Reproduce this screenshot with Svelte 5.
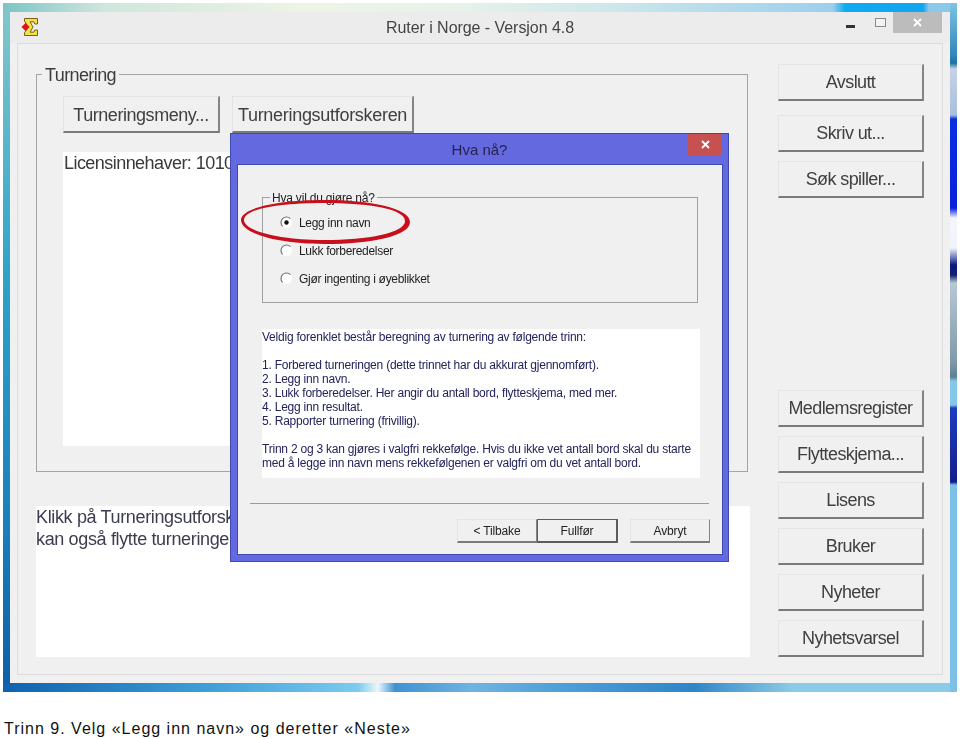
<script>
	const topButtons = ['Skriv ut...', 'Søk spiller...'];
	const lowerButtons = ['Medlemsregister', 'Flytteskjema...', 'Lisens', 'Bruker', 'Nyheter', 'Nyhetsvarsel'];
	const options = ['Legg inn navn', 'Lukk forberedelser', 'Gjør ingenting i øyeblikket'];
	const steps = [
		'1. Forbered turneringen (dette trinnet har du akkurat gjennomført).',
		'2. Legg inn navn.',
		'3. Lukk forberedelser. Her angir du antall bord, flytteskjema, med mer.',
		'4. Legg inn resultat.',
		'5. Rapporter turnering (frivillig).'
	];
</script>

<div class="frame">
	<div class="window">
		<header class="titlebar">
			<svg class="logo" width="18" height="20" viewBox="0 0 18 20">
				<path d="M3.5 1.5H16.5V7H13.8L12.8 4.8H9L12 10L9 15.2H12.8L13.8 13H16.5V18.5H3.5V15.8L7.5 10L3.5 4.2Z" fill="#f0e444" stroke="#7a5f12" stroke-width="1" />
				<path d="M4.5 6L8.5 10L4.5 14L0.5 10Z" fill="#e2101c" />
			</svg>
			<span class="title">Ruter i Norge - Versjon 4.8</span>
			<div class="controls">
				<span class="minimize"></span>
				<span class="maximize"></span>
				<span class="close">
					<svg width="11" height="11" viewBox="0 0 11 11"><path d="M2 2L9 9M9 2L2 9" stroke="#fff" stroke-width="1.8" /></svg>
				</span>
			</div>
		</header>

		<div class="panel">
			<div class="left">
				<section class="group">
					<span class="group-label">Turnering</span>
					<div class="group-actions">
						<button class="btn menu">Turneringsmeny...</button>
						<button class="btn explorer">Turneringsutforskeren</button>
					</div>
					<div class="license">Licensinnehaver: 1010</div>
				</section>
				<div class="hint">
					Klikk på Turneringsutforskeren<br />
					kan også flytte turneringen
				</div>
			</div>
			<nav class="right">
				<button class="btn side quit">Avslutt</button>
				{#each topButtons as label}
					<button class="btn side">{label}</button>
				{/each}
				<div class="spacer"></div>
				{#each lowerButtons as label}
					<button class="btn side">{label}</button>
				{/each}
			</nav>
		</div>

		<div class="dialog">
			<div class="dialog-title">Hva nå?</div>
			<span class="dialog-close">
				<svg width="11" height="11" viewBox="0 0 11 11"><path d="M2 2L9 9M9 2L2 9" stroke="#fff" stroke-width="1.8" /></svg>
			</span>
			<div class="dialog-body">
				<section class="choice">
					<span class="choice-label">Hva vil du gjøre nå?</span>
					{#each options as option, i}
						<div class="option">
							<svg width="13" height="13" viewBox="0 0 13 13">
								<circle cx="6.5" cy="6.5" r="5.5" fill="#fff" />
								<path d="M2.6 10.4A5.5 5.5 0 0 1 10.4 2.6" fill="none" stroke="#6e6e6e" stroke-width="1.1" />
								{#if i === 0}<circle cx="6.5" cy="6.5" r="2.2" fill="#111" />{/if}
							</svg>
							<span>{option}</span>
						</div>
					{/each}
				</section>

				<div class="info">
					<p>Veldig forenklet består beregning av turnering av følgende trinn:</p>
					<p>
						{#each steps as step}
							{step}<br />
						{/each}
					</p>
					<p>Trinn 2 og 3 kan gjøres i valgfri rekkefølge. Hvis du ikke vet antall bord skal du starte<br />med å legge inn navn mens rekkefølgenen er valgfri om du vet antall bord.</p>
				</div>

				<div class="separator"></div>

				<div class="dialog-actions">
					<button class="btn small">&lt; Tilbake</button>
					<button class="btn small default">Fullfør</button>
					<button class="btn small cancel">Avbryt</button>
				</div>
			</div>
		</div>

		<svg class="marker" width="172" height="46" viewBox="0 0 172 46">
			<path fill="#c8101c" fill-rule="evenodd" d="M1 21C1 9 38 1 84 1S170 9 170 23S132 45 84 45S1 34 1 21ZM4 21C4 32 40 41 84 41S165 34 165 22S130 4 84 4S4 10 4 21Z" />
		</svg>
	</div>
</div>

<p class="caption">Trinn 9. Velg «Legg inn navn» og deretter «Neste»</p>

<style>
	:global(body) {
		background: #fff;
	}

	.frame {
		box-sizing: border-box;
		width: 954px;
		height: 689px;
		margin: 3px 0 0 3px;
		padding: 9px 7px;
		filter: blur(0.4px);
		background:
			linear-gradient(to bottom, #7fc3e6 0, #2f86b8 53px, #1d6fa4 60px, #c5d3e4 66px, #a9bfdc 112px, #0a2fe0 116px, #0a20d8 205px, #f4f6fb 215px, #f0f4fa 245px, #0a1a80 262px, #11206e 272px, #b7c8d4 280px, #7f98a8 360px, #5d8092 374px, #86c6e6 378px, #86c6e6 402px, #1c3cc0 405px, #141e8a 479px, #7cc0e6 482px, #7cc0e6 100%) right / 7px 100% no-repeat,
			linear-gradient(to right, #0e62ad 0, #3f9cd6 200px, #7ccbf0 355px, #e8f6fc 375px, #3f92d2 392px, #6fb4e2 470px, #4e9ed8 560px, #2f85c8 690px, #8ccbe8 790px, #8ccbe8 100%) bottom / 100% 9px no-repeat,
			linear-gradient(to right, #7cc4c8 0, #cfe6dc 100px, #eef3e6 300px, #e8f2ea 450px, #cfe8ea 600px, #9ccfec 830px, #0faaf0 842px, #12a6ee 920px, #8cc8ea 926px, #8cc8ea 100%) top / 100% 9px no-repeat,
			linear-gradient(to bottom, #84c8cc 0, #2da3c8 40%, #1a80bc 75%, #0c5ea8 100%);
	}

	.window {
		position: relative;
		display: flex;
		flex-direction: column;
		height: 100%;
		background: #f0f0f0;
		font-family: 'Liberation Sans', Arial, sans-serif;
	}

	.titlebar {
		position: relative;
		display: flex;
		flex: none;
		align-items: center;
		justify-content: center;
		height: 31px;
		background: #ececec;
	}

	.logo {
		position: absolute;
		left: 11px;
		top: 5px;
	}

	.title {
		font-size: 16px;
		letter-spacing: -0.05px;
		color: #444;
		padding-top: 1px;
	}

	.controls {
		position: absolute;
		top: 0;
		right: 8px;
		display: flex;
		align-items: flex-start;
	}

	.minimize {
		width: 9px;
		height: 3px;
		margin: 13px 20px 0 0;
		background: #333;
	}

	.maximize {
		box-sizing: border-box;
		width: 11px;
		height: 9px;
		margin: 6px 7px 0 0;
		border: 1px solid #8a8a8a;
		background: #f2f2f2;
	}

	.close {
		display: flex;
		align-items: center;
		justify-content: center;
		width: 49px;
		height: 21px;
		background: #bcbcbc;
	}

	.panel {
		display: flex;
		flex: 1;
		margin: 0 7px 8px;
		padding: 20px 18px 17px;
		border: 1px solid #dcdcdc;
		min-height: 0;
	}

	.left {
		display: flex;
		flex-direction: column;
		width: 714px;
	}

	.group {
		position: relative;
		box-sizing: border-box;
		width: 712px;
		height: 398px;
		margin-top: 10px;
		padding: 21px 26px 0;
		border: 1px solid #a4a4a4;
	}

	.group-label {
		position: absolute;
		left: 5px;
		top: -10px;
		padding: 0 3px;
		background: #f0f0f0;
		font-size: 18px;
		letter-spacing: -0.6px;
		color: #3c3c3c;
	}

	.group-actions {
		display: flex;
		gap: 12px;
	}

	.btn {
		box-sizing: border-box;
		padding: 0;
		background: #f0f0f0;
		border: 1px solid #e4e4e4;
		border-right: 2px solid #858585;
		border-bottom: 2px solid #7a7a7a;
		font-family: inherit;
		color: #404040;
	}

	.menu,
	.explorer,
	.side {
		height: 37px;
		font-size: 18px;
		letter-spacing: -0.3px;
	}

	.menu,
	.explorer {
		padding-top: 2px;
	}

	.menu {
		width: 157px;
		letter-spacing: -0.45px;
	}

	.explorer {
		width: 182px;
	}

	.license {
		box-sizing: border-box;
		width: 660px;
		height: 294px;
		margin-top: 19px;
		padding: 0 1px;
		background: #fff;
		font-size: 18px;
		line-height: 22px;
		letter-spacing: -0.55px;
		color: #3a3a3a;
	}

	.hint {
		box-sizing: border-box;
		width: 714px;
		height: 151px;
		margin-top: 34px;
		background: #fff;
		font-size: 18px;
		line-height: 22px;
		letter-spacing: -0.35px;
		color: #3c3c50;
	}

	.right {
		display: flex;
		flex-direction: column;
		gap: 9px;
		width: 146px;
		margin-left: 28px;
	}

	.side {
		width: 146px;
		flex: none;
		letter-spacing: -0.6px;
	}

	.quit {
		margin-bottom: 5px;
	}

	.spacer {
		flex: 1;
	}

	.dialog {
		position: absolute;
		left: 220px;
		top: 121px;
		box-sizing: border-box;
		width: 499px;
		height: 429px;
		padding: 0 6px 7px 7px;
		display: flex;
		flex-direction: column;
		background: #6569df;
		border: 1px solid #3d4bb0;
	}

	.dialog-title {
		flex: none;
		height: 31px;
		line-height: 32px;
		padding-right: 1px;
		text-align: center;
		font-size: 15px;
		color: #24244e;
	}

	.dialog-close {
		position: absolute;
		top: 0;
		right: 6px;
		display: flex;
		align-items: center;
		justify-content: center;
		width: 34px;
		height: 21px;
		background: #c75050;
	}

	.dialog-body {
		flex: 1;
		display: flex;
		flex-direction: column;
		background: #f0f0f0;
		outline: 1px solid #3d4bb0;
	}

	.choice {
		position: relative;
		box-sizing: border-box;
		width: 436px;
		height: 106px;
		margin: 32px 0 0 24px;
		padding: 11px 0 0 17px;
		border: 1px solid #a0a0a0;
	}

	.choice-label {
		position: absolute;
		left: 7px;
		top: -7px;
		padding: 0 2px;
		background: #f0f0f0;
		font-size: 12px;
		line-height: 14px;
		letter-spacing: -0.2px;
		color: #222;
	}

	.option {
		display: flex;
		align-items: center;
		gap: 6px;
		height: 28px;
		font-size: 12px;
		letter-spacing: -0.3px;
		color: #1e1e1e;
	}

	.option svg {
		margin-top: -2px;
	}

	.info {
		box-sizing: border-box;
		flex: none;
		width: 438px;
		height: 149px;
		margin: 26px 0 0 24px;
		padding-top: 1px;
		background: #fff;
		font-size: 12px;
		line-height: 14px;
		letter-spacing: -0.22px;
		color: #23235c;
	}

	.info p {
		margin: 0 0 14px;
		white-space: nowrap;
	}

	.separator {
		flex: none;
		width: 459px;
		height: 1px;
		margin: 25px 0 0 12px;
		background: #9a9a9a;
	}

	.dialog-actions {
		display: flex;
		justify-content: flex-end;
		margin: 15px 12px 0 0;
	}

	.small {
		width: 80px;
		height: 24px;
		font-size: 12px;
		letter-spacing: -0.15px;
		color: #222;
		border-right-width: 1px;
		border-bottom-width: 2px;
	}

	.default {
		width: 81px;
		border: 2px solid #5c5c5c;
		border-top-width: 1px;
		border-left-width: 1px;
	}

	.cancel {
		margin-left: 12px;
	}

	.marker {
		position: absolute;
		left: 230px;
		top: 187px;
	}

	.caption {
		margin: 27px 0 0 4px;
		font-family: 'Liberation Sans', Arial, sans-serif;
		font-size: 16px;
		line-height: 20px;
		letter-spacing: 1px;
		color: #111;
	}
</style>
